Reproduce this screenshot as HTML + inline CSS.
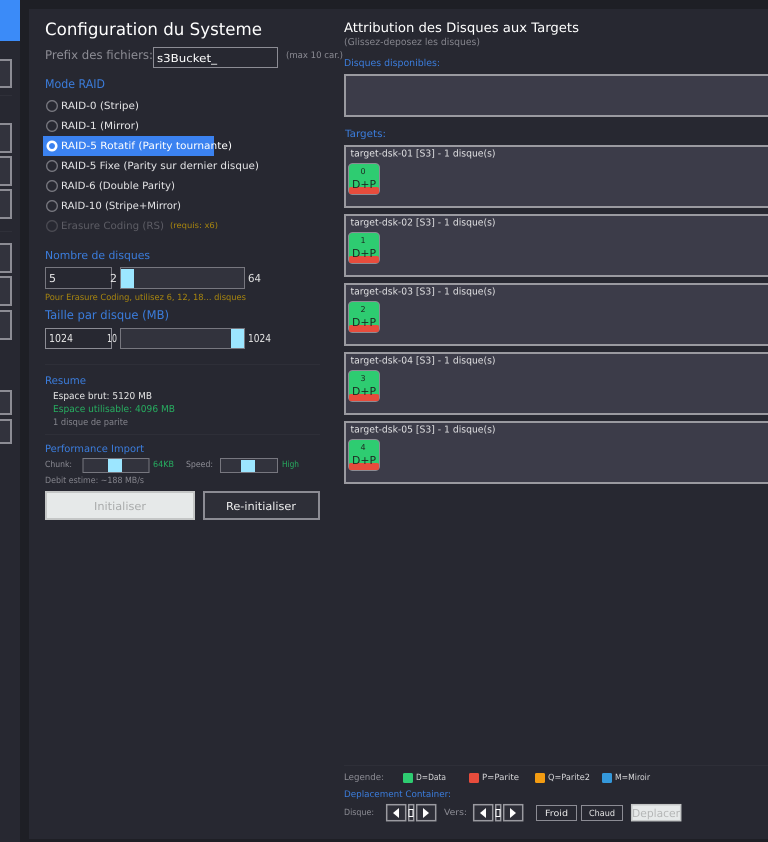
<!DOCTYPE html>
<html><head><meta charset="utf-8"><style>
html,body{margin:0;padding:0;background:#1e1f25;width:768px;height:842px;overflow:hidden}
svg{display:block}
text{font-family:"DejaVu Sans","Liberation Sans",sans-serif;dominant-baseline:auto}
</style></head><body>
<svg width="768" height="842" viewBox="0 0 768 842" xmlns="http://www.w3.org/2000/svg" text-rendering="geometricPrecision">
<rect width="768" height="842" fill="#1e1f25"/>
<rect x="0" y="0" width="20" height="842" fill="#272831"/>
<rect x="29" y="9" width="739" height="830" fill="#272831"/>
<rect x="0" y="0" width="20" height="41" fill="#3b8bf8"/>
<g fill="#32333d" stroke="#8c8c94" stroke-width="2">
<rect x="-5" y="60" width="16" height="27"/>
<rect x="-5" y="124" width="16" height="28"/>
<rect x="-5" y="157" width="16" height="28"/>
<rect x="-5" y="190" width="16" height="28"/>
<rect x="-5" y="244" width="16" height="28"/>
<rect x="-5" y="277" width="16" height="28"/>
<rect x="-5" y="311" width="16" height="28"/>
<rect x="-5" y="391" width="16" height="23"/>
<rect x="-5" y="420" width="16" height="23"/>
</g>
<rect x="0" y="95" width="12" height="1" fill="#2f3039"/>
<rect x="0" y="231" width="12" height="1" fill="#2f3039"/>

<text x="45" y="35" font-size="17" fill="#fff" textLength="217" lengthAdjust="spacingAndGlyphs">Configuration du Systeme</text>
<text x="45" y="59" font-size="12" fill="#8d8d95" textLength="108" lengthAdjust="spacingAndGlyphs">Prefix des fichiers:</text>
<rect x="153.500" y="47.500" width="124" height="20" fill="#272831" stroke="#8c8c94"/>
<text x="157" y="62" font-size="11" fill="#fff" textLength="60" lengthAdjust="spacingAndGlyphs">s3Bucket_</text>
<text x="286" y="58" font-size="9" fill="#8d8d95" textLength="57" lengthAdjust="spacingAndGlyphs">(max 10 car.)</text>
<text x="45" y="88" font-size="12" fill="#3b7ddd" textLength="60" lengthAdjust="spacingAndGlyphs">Mode RAID</text>

<rect x="43" y="136" width="171" height="20" fill="#3b82f0"/>
<g fill="none" stroke="#77777f" stroke-width="1.300">
<circle cx="52" cy="106" r="5.300"/><circle cx="52" cy="126" r="5.300"/><circle cx="52" cy="166" r="5.300"/><circle cx="52" cy="186" r="5.300"/><circle cx="52" cy="206" r="5.300"/>
<circle cx="52" cy="226" r="5.300" stroke="#4a4a52"/>
</g>
<circle cx="52" cy="146" r="5.500" fill="#fff"/><circle cx="52" cy="146" r="3" fill="#3b82f0"/>
<g font-size="10" fill="#e4e4e6">
<text x="61" y="109" textLength="78" lengthAdjust="spacingAndGlyphs">RAID-0 (Stripe)</text>
<text x="61" y="129" textLength="78" lengthAdjust="spacingAndGlyphs">RAID-1 (Mirror)</text>
<text x="61" y="149" textLength="171" lengthAdjust="spacingAndGlyphs" fill="#fff">RAID-5 Rotatif (Parity tournante)</text>
<text x="61" y="169" textLength="198" lengthAdjust="spacingAndGlyphs">RAID-5 Fixe (Parity sur dernier disque)</text>
<text x="61" y="189" textLength="114" lengthAdjust="spacingAndGlyphs">RAID-6 (Double Parity)</text>
<text x="61" y="209" textLength="120" lengthAdjust="spacingAndGlyphs">RAID-10 (Stripe+Mirror)</text>
<text x="61" y="229" textLength="103" lengthAdjust="spacingAndGlyphs" fill="#5d5d65">Erasure Coding (RS)</text>
</g>
<text x="170" y="228" font-size="8" fill="#a8860f" textLength="48" lengthAdjust="spacingAndGlyphs">(requis: x6)</text>

<text x="45" y="259" font-size="11" fill="#3b7ddd" textLength="105" lengthAdjust="spacingAndGlyphs">Nombre de disques</text>
<rect x="45.500" y="267.500" width="66" height="21" fill="#272831" stroke="#77777f"/>
<text x="49" y="282" font-size="11" fill="#e8e8e8" textLength="7" lengthAdjust="spacingAndGlyphs">5</text>
<text x="110" y="282" font-size="11" fill="#e8e8e8" textLength="7" lengthAdjust="spacingAndGlyphs">2</text>
<rect x="120.500" y="267.500" width="124" height="21" fill="#32333d" stroke="#77777f"/>
<rect x="121" y="269" width="13" height="19" fill="#9ce6ff"/>
<text x="248" y="282" font-size="11" fill="#e0e0e0" textLength="13" lengthAdjust="spacingAndGlyphs">64</text>
<text x="45" y="300" font-size="8.500" fill="#a8860f" textLength="201" lengthAdjust="spacingAndGlyphs">Pour Erasure Coding, utilisez 6, 12, 18... disques</text>
<text x="45" y="319" font-size="12" fill="#3b7ddd" textLength="124" lengthAdjust="spacingAndGlyphs">Taille par disque (MB)</text>
<rect x="45.500" y="328.500" width="66" height="20" fill="#272831" stroke="#8c8c94"/>
<text x="49" y="342" font-size="11" fill="#e8e8e8" textLength="24" lengthAdjust="spacingAndGlyphs">1024</text>
<text x="107" y="342" font-size="11" fill="#e8e8e8" textLength="10" lengthAdjust="spacingAndGlyphs">10</text>
<rect x="120.500" y="328.500" width="124" height="20" fill="#32333d" stroke="#77777f"/>
<rect x="231" y="329" width="13" height="19" fill="#9ce6ff"/>
<text x="248" y="342" font-size="11" fill="#e8e8e8" textLength="23" lengthAdjust="spacingAndGlyphs">1024</text>

<rect x="45" y="364" width="275" height="1" fill="#2e2f38"/>
<text x="45" y="384" font-size="10.500" fill="#3b7ddd" textLength="41" lengthAdjust="spacingAndGlyphs">Resume</text>
<text x="53" y="399" font-size="9.500" fill="#e6e6e6" textLength="99" lengthAdjust="spacingAndGlyphs">Espace brut: 5120 MB</text>
<text x="53" y="412" font-size="9.500" fill="#27ae60" textLength="122" lengthAdjust="spacingAndGlyphs">Espace utilisable: 4096 MB</text>
<text x="53" y="425" font-size="9" fill="#85858d" textLength="75" lengthAdjust="spacingAndGlyphs">1 disque de parite</text>
<rect x="45" y="434" width="275" height="1" fill="#2e2f38"/>
<text x="45" y="452" font-size="10" fill="#3b7ddd" textLength="99" lengthAdjust="spacingAndGlyphs">Performance Import</text>
<text x="45" y="467" font-size="8.500" fill="#8d8d95" textLength="27" lengthAdjust="spacingAndGlyphs">Chunk:</text>
<rect x="83" y="458.500" width="66" height="14" fill="#32333d" stroke="#77777f"/>
<rect x="108" y="459" width="14" height="13" fill="#9ce6ff"/>
<text x="153" y="467" font-size="8.500" fill="#27ae60" textLength="21" lengthAdjust="spacingAndGlyphs">64KB</text>
<text x="186" y="467" font-size="8.500" fill="#8d8d95" textLength="27" lengthAdjust="spacingAndGlyphs">Speed:</text>
<rect x="220.500" y="458.500" width="57" height="14" fill="#32333d" stroke="#77777f"/>
<rect x="241" y="460" width="14" height="12" fill="#9ce6ff"/>
<text x="282" y="467" font-size="8.500" fill="#27ae60" textLength="17" lengthAdjust="spacingAndGlyphs">High</text>
<text x="45" y="483" font-size="8.500" fill="#85858d" textLength="99" lengthAdjust="spacingAndGlyphs">Debit estime: ~188 MB/s</text>
<rect x="46" y="492" width="148" height="27" fill="#e6e9e9" stroke="#c4c6c6" stroke-width="2"/>
<text x="94" y="510" font-size="11" fill="#a9abab" textLength="52" lengthAdjust="spacingAndGlyphs">Initialiser</text>
<rect x="204" y="492" width="115" height="27" fill="#2e2f38" stroke="#8c8c94" stroke-width="2"/>
<text x="226" y="510" font-size="11" fill="#f0f0f0" textLength="70" lengthAdjust="spacingAndGlyphs">Re-initialiser</text>

<text x="344" y="32" font-size="13" fill="#fff" textLength="235" lengthAdjust="spacingAndGlyphs">Attribution des Disques aux Targets</text>
<text x="344" y="45" font-size="9.500" fill="#85858d" textLength="136" lengthAdjust="spacingAndGlyphs">(Glissez-deposez les disques)</text>
<text x="344" y="66" font-size="9.500" fill="#3b7ddd" textLength="96" lengthAdjust="spacingAndGlyphs">Disques disponibles:</text>
<rect x="345" y="75" width="430" height="41" fill="#3c3c49" stroke="#9a9aa0" stroke-width="2"/>
<text x="345" y="137" font-size="10" fill="#3b7ddd" textLength="41" lengthAdjust="spacingAndGlyphs">Targets:</text>

<g id="targets">
<rect x="345" y="146" width="430" height="61" fill="#3c3c49" stroke="#9a9aa0" stroke-width="2"/>
<rect x="345" y="215" width="430" height="61" fill="#3c3c49" stroke="#9a9aa0" stroke-width="2"/>
<rect x="345" y="284" width="430" height="61" fill="#3c3c49" stroke="#9a9aa0" stroke-width="2"/>
<rect x="345" y="353" width="430" height="61" fill="#3c3c49" stroke="#9a9aa0" stroke-width="2"/>
<rect x="345" y="422" width="430" height="61" fill="#3c3c49" stroke="#9a9aa0" stroke-width="2"/>
</g>
<g font-size="9.500" fill="#e0e0e2">
<text x="350.500" y="156.500" textLength="145" lengthAdjust="spacingAndGlyphs">target-dsk-01 [S3] - 1 disque(s)</text>
<text x="350.500" y="225.500" textLength="145" lengthAdjust="spacingAndGlyphs">target-dsk-02 [S3] - 1 disque(s)</text>
<text x="350.500" y="294.500" textLength="145" lengthAdjust="spacingAndGlyphs">target-dsk-03 [S3] - 1 disque(s)</text>
<text x="350.500" y="363.500" textLength="145" lengthAdjust="spacingAndGlyphs">target-dsk-04 [S3] - 1 disque(s)</text>
<text x="350.500" y="432.500" textLength="145" lengthAdjust="spacingAndGlyphs">target-dsk-05 [S3] - 1 disque(s)</text>
</g>

<g>
<rect x="348.500" y="163.500" width="31" height="31" rx="4" fill="#2ecc71" stroke="#8c8c94"/><rect x="349" y="187" width="30" height="7" rx="2" fill="#e74c3c"/>
<rect x="348.500" y="232.500" width="31" height="31" rx="4" fill="#2ecc71" stroke="#8c8c94"/><rect x="349" y="256" width="30" height="7" rx="2" fill="#e74c3c"/>
<rect x="348.500" y="301.500" width="31" height="31" rx="4" fill="#2ecc71" stroke="#8c8c94"/><rect x="349" y="325" width="30" height="7" rx="2" fill="#e74c3c"/>
<rect x="348.500" y="370.500" width="31" height="31" rx="4" fill="#2ecc71" stroke="#8c8c94"/><rect x="349" y="394" width="30" height="7" rx="2" fill="#e74c3c"/>
<rect x="348.500" y="439.500" width="31" height="31" rx="4" fill="#2ecc71" stroke="#8c8c94"/><rect x="349" y="463" width="30" height="7" rx="2" fill="#e74c3c"/>
</g>
<g fill="#1e2a22" text-anchor="middle" font-size="8">
<text x="363" y="174">0</text><text x="363" y="243">1</text><text x="363" y="312">2</text><text x="363" y="381">3</text><text x="363" y="450">4</text>
</g>
<g fill="#1e2a22" font-size="11">
<text x="352" y="188" textLength="24" lengthAdjust="spacingAndGlyphs">D+P</text>
<text x="352" y="257" textLength="24" lengthAdjust="spacingAndGlyphs">D+P</text>
<text x="352" y="326" textLength="24" lengthAdjust="spacingAndGlyphs">D+P</text>
<text x="352" y="395" textLength="24" lengthAdjust="spacingAndGlyphs">D+P</text>
<text x="352" y="464" textLength="24" lengthAdjust="spacingAndGlyphs">D+P</text>
</g>

<rect x="344" y="765" width="424" height="1" fill="#2e2f38"/>
<text x="344" y="780" font-size="9" fill="#8d8d95" textLength="40" lengthAdjust="spacingAndGlyphs">Legende:</text>
<rect x="403" y="773" width="10" height="10" rx="1.500" fill="#2ecc71"/>
<text x="416" y="780" font-size="8.500" fill="#d8d8da" textLength="30" lengthAdjust="spacingAndGlyphs">D=Data</text>
<rect x="469" y="773" width="10" height="10" rx="1.500" fill="#e74c3c"/>
<text x="482" y="780" font-size="8.500" fill="#d8d8da" textLength="37" lengthAdjust="spacingAndGlyphs">P=Parite</text>
<rect x="535" y="773" width="10" height="10" rx="1.500" fill="#f39c12"/>
<text x="548" y="780" font-size="8.500" fill="#d8d8da" textLength="42" lengthAdjust="spacingAndGlyphs">Q=Parite2</text>
<rect x="602" y="773" width="10" height="10" rx="1.500" fill="#3498db"/>
<text x="615" y="780" font-size="8.500" fill="#d8d8da" textLength="35" lengthAdjust="spacingAndGlyphs">M=Miroir</text>
<text x="344" y="797" font-size="9" fill="#3b7ddd" textLength="107" lengthAdjust="spacingAndGlyphs">Deplacement Container:</text>
<text x="344" y="815" font-size="8.500" fill="#8d8d95" textLength="30" lengthAdjust="spacingAndGlyphs">Disque:</text>
<text x="444" y="815" font-size="8.500" fill="#8d8d95" textLength="23" lengthAdjust="spacingAndGlyphs">Vers:</text>
<g fill="#2e2f38" stroke="#9a9aa0" stroke-width="1.500">
<rect x="386.700" y="804.700" width="19" height="16"/>
<rect x="408.700" y="804.700" width="5" height="16"/>
<rect x="416.700" y="804.700" width="19" height="16"/>
<rect x="473.700" y="804.700" width="19" height="16"/>
<rect x="495.700" y="804.700" width="5" height="16"/>
<rect x="503.700" y="804.700" width="19" height="16"/>
</g>
<g fill="#fff">
<path d="M399 808v10l-6-5z"/><path d="M423 808v10l6-5z"/>
<path d="M486 808v10l-6-5z"/><path d="M510 808v10l6-5z"/>
</g>
<g fill="none" stroke="#fff">
<rect x="409" y="809.500" width="4" height="7"/><rect x="496" y="809.500" width="4" height="7"/>
</g>
<rect x="536.500" y="805.500" width="40" height="15" fill="#272831" stroke="#8c8c94"/>
<text x="545" y="816" font-size="8.500" fill="#e8e8e8" textLength="23" lengthAdjust="spacingAndGlyphs">Froid</text>
<rect x="581.500" y="805.500" width="41" height="15" fill="#272831" stroke="#8c8c94"/>
<text x="589" y="816" font-size="8.500" fill="#e8e8e8" textLength="26" lengthAdjust="spacingAndGlyphs">Chaud</text>
<rect x="631.700" y="804.700" width="49" height="16" fill="#e6e9e9" stroke="#c4c6c6" stroke-width="1.500"/>
<text x="632" y="817" font-size="11" fill="#b4b6b6" textLength="48" lengthAdjust="spacingAndGlyphs">Deplacer</text>
</svg>
</body></html>
